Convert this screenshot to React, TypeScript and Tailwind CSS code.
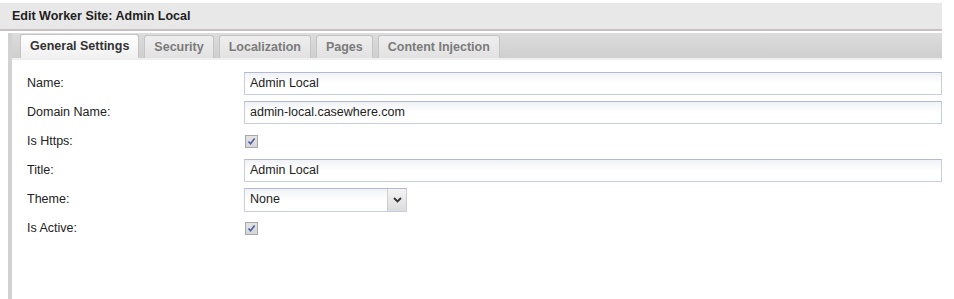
import React from "react";

const tabs = ["General Settings", "Security", "Localization", "Pages", "Content Injection"];

const CheckBox = () => (
  <span className="ml-[1px] flex h-[13px] w-[13px] items-center justify-center border border-[#a8a8a8] bg-gradient-to-b from-[#e4e4e4] to-[#d6d6d6]">
    <svg width="9" height="9" viewBox="0 0 9 9">
      <path d="M1.5 4.5 L3.6 6.8 L7.6 1.4" fill="none" stroke="#4c5fa6" strokeWidth="1.6" />
    </svg>
  </span>
);

const TextInput = ({ value }: { value: string }) => (
  <div className="flex h-[23px] flex-1 items-center border border-[#c9ccd9] border-t-[#b5b9cf] bg-gradient-to-b from-[#f1f2f6] via-white to-white pl-[5px] text-[#222]">
    {value}
  </div>
);

const Row = ({ label, children }: { label: string; children: React.ReactNode }) => (
  <div className="flex h-[29px] items-center">
    <div className="w-[232px] pl-[15px] text-[#222]">{label}</div>
    <div className="flex flex-1 items-center">{children}</div>
  </div>
);

export default function App() {
  return (
    <div
      className="h-[299px] w-[954px] overflow-hidden bg-white text-[12.5px]"
      style={{ fontFamily: "Tahoma, 'Liberation Sans', Arial, sans-serif" }}
    >
      <div className="pr-[12px] pt-[3px]">
        <div className="flex h-[28px] items-center border-b-2 border-[#c9c1c1] bg-[#e8e8e8] pl-[12px] font-bold text-[#1e1e1e]">
          Edit Worker Site: Admin Local
        </div>
      </div>
      <div className="ml-[8px] mr-[12px] h-[270px] border-l-4 border-[#d2d2d2]">
        <div className="mt-[2px] flex h-[27px] items-end gap-[5px] border-b-2 border-[#efefef] bg-gradient-to-b from-[#dcdcdc] to-[#cfcfcf] pl-[8px]">
          {tabs.map((t, i) => (
            <div
              key={t}
              className={
                i === 0
                  ? "flex h-[24px] items-center rounded-t-[3px] border border-b-0 border-[#c4c4c4] bg-gradient-to-b from-white to-[#f0f0f0] px-[9px] font-bold text-[#333]"
                  : "flex h-[23px] items-center rounded-t-[3px] border border-b-0 border-[#c4c4c4] bg-gradient-to-b from-[#eeeeee] to-[#e2e2e2] px-[9px] font-bold text-[#7b7b7b]"
              }
            >
              {t}
            </div>
          ))}
        </div>
        <div className="pt-[9px]">
          <Row label="Name:">
            <TextInput value="Admin Local" />
          </Row>
          <Row label="Domain Name:">
            <TextInput value="admin-local.casewhere.com" />
          </Row>
          <Row label="Is Https:">
            <CheckBox />
          </Row>
          <Row label="Title:">
            <TextInput value="Admin Local" />
          </Row>
          <Row label="Theme:">
            <div className="flex h-[24px] w-[163px] border border-[#c9ccd9] border-t-[#b5b9cf]">
              <div className="flex flex-1 items-center bg-gradient-to-b from-[#f1f2f6] via-white to-white pl-[5px] text-[#222]">
                None
              </div>
              <div className="flex w-[19px] items-center justify-center border-l border-[#d0d0d0] bg-gradient-to-b from-[#f4f4f4] to-[#dcdcdc]">
                <svg width="9" height="6" viewBox="0 0 9 6">
                  <path d="M1 1 L4.5 4.5 L8 1" fill="none" stroke="#333" strokeWidth="1.8" />
                </svg>
              </div>
            </div>
          </Row>
          <Row label="Is Active:">
            <CheckBox />
          </Row>
        </div>
      </div>
    </div>
  );
}
